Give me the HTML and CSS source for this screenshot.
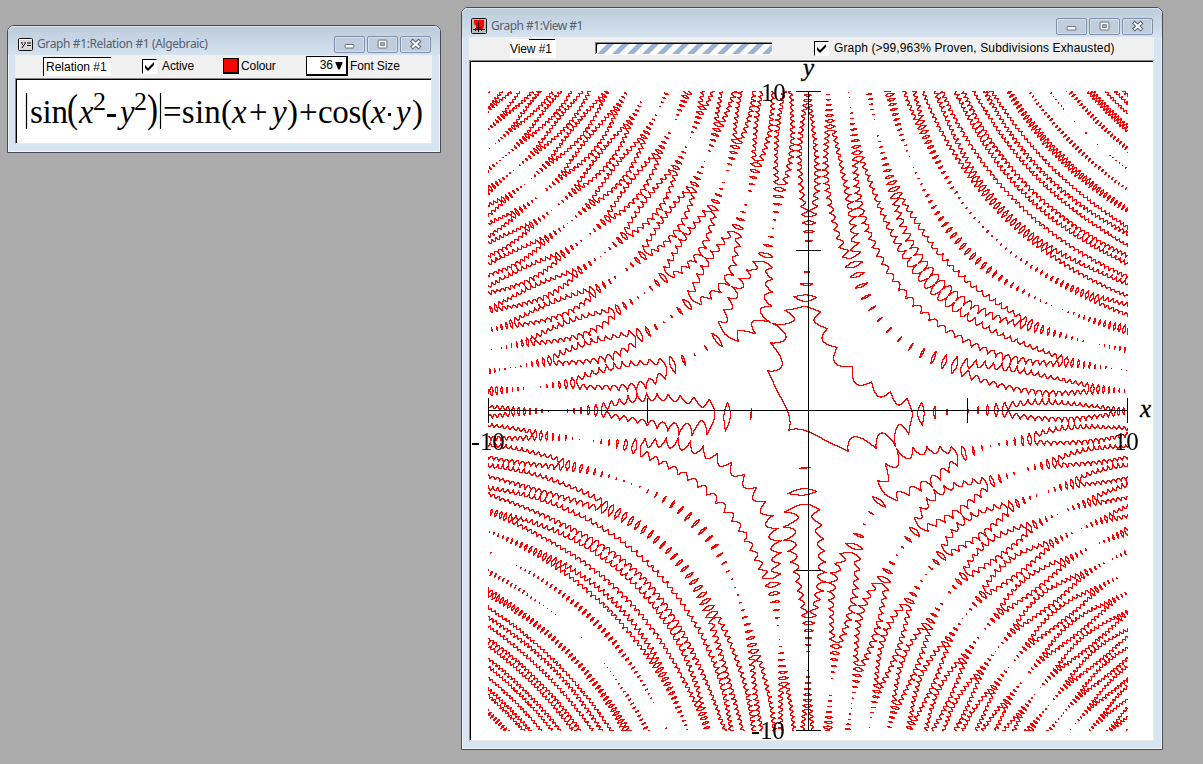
FILE: index.html
```html
<!DOCTYPE html>
<html lang="en">
<head>
<meta charset="utf-8">
<title>Graph #1</title>
<link rel="stylesheet" href="styles.css">
</head>
<body>
<svg class="defs" width="0" height="0">
  <symbol id="min" viewBox="0 0 31 17"><rect x="10.500" y="8.500" width="10" height="4" rx="1" fill="#fff" stroke="#5a6070"/></symbol>
  <symbol id="max" viewBox="0 0 31 17"><rect x="10.500" y="3.500" width="10" height="9" rx="1" fill="#fff" stroke="#5a6070"/><rect x="13.500" y="6.500" width="4" height="3" fill="#b8c8da" stroke="#5a6070"/></symbol>
  <symbol id="cls" viewBox="0 0 31 17"><path d="M12.500 5L19 11M19 5L12.500 11" stroke="#5a6070" stroke-width="4.600" stroke-linecap="square"/><path d="M12.500 5L19 11M19 5L12.500 11" stroke="#fff" stroke-width="2.400" stroke-linecap="square"/></symbol>
  <symbol id="tick" viewBox="0 0 13 13"><path d="M2 5v3l3 3 6-6V2L5 8z" fill="#000"/></symbol>
</svg>

<section class="window relation">
  <header class="titlebar">
    <svg class="app-icon" width="15" height="13" viewBox="0 0 15 13"><rect x=".5" y=".5" width="14" height="12" rx="1" fill="#d8d8d8" stroke="#111"/><path d="M1.500 11.500V1.500H13.500" fill="none" stroke="#fff"/><path d="M4 4v2l1.500 1.500L7 6V4M6 7L4 10M9 5h4M9 7.500h4" fill="none" stroke="#000"/></svg>
    <h1>Graph #1:Relation #1 (Algebraic)</h1>
    <nav class="controls"><svg viewBox="0 0 31 17"><use href="#min"/></svg><svg viewBox="0 0 31 17"><use href="#max"/></svg><svg viewBox="0 0 31 17"><use href="#cls"/></svg></nav>
  </header>
  <div class="toolbar">
    <span class="field relation-name">Relation #1</span>
    <span class="check"><svg><use href="#tick"/></svg></span><span class="label active">Active</span>
    <span class="swatch"></span><span class="label colour">Colour</span>
    <span class="select">36<i></i></span><span class="label">Font Size</span>
  </div>
  <div class="pane formula">
    <svg width="413" height="62" viewBox="0 0 413 62">
      <path d="M10.500 14V50M144.500 14V50" stroke="#000" stroke-width="1.200"/>
      <g class="math">
        <text x="14" y="44" textLength="38">sin</text>
        <text class="paren" transform="translate(51 43) scale(1 1.190)">(</text>
        <text class="var" x="63" y="44">x</text><text class="sup" x="77" y="31">2</text>
        <path d="M91 35h9v3h-9z"/>
        <text class="var" x="104" y="44">y</text><text class="sup" x="118" y="31">2</text>
        <text class="paren" transform="translate(131 43) scale(1 1.190)">)</text>
        <text x="147" y="44" textLength="69">=sin(</text>
        <text class="var" x="216" y="44">x</text><text x="233" y="44">+</text>
        <text class="var" x="256" y="44">y</text><text x="271" y="44">)</text>
        <text x="283" y="44">+</text>
        <text x="302" y="44" textLength="54">cos(</text>
        <text class="var" x="355" y="44">x</text><rect x="372" y="34" width="3" height="3"/>
        <text class="var" x="380" y="44">y</text><text x="396" y="44">)</text>
      </g>
    </svg>
  </div>
</section>

<section class="window view">
  <header class="titlebar">
    <svg class="app-icon" width="16" height="16" viewBox="0 0 16 16"><rect x=".5" y=".5" width="15" height="15" rx="1" fill="#bbb" stroke="#111"/><path d="M3 2h10v7l-2 2H5V8L3 6z" fill="#f00"/><path d="M7.500 3v11M2 11.500h12M4.500 10v3M10.500 9v4M5.500 9.500h4" stroke="#000" fill="none"/></svg>
    <h1>Graph #1:View #1</h1>
    <nav class="controls"><svg viewBox="0 0 31 17"><use href="#min"/></svg><svg viewBox="0 0 31 17"><use href="#max"/></svg><svg viewBox="0 0 31 17"><use href="#cls"/></svg></nav>
  </header>
  <div class="toolbar">
    <span class="field view-name">View #1</span>
    <svg class="progress" width="178" height="13" viewBox="0 0 178 13">
      <defs><pattern id="stripes" width="15" height="10" patternUnits="userSpaceOnUse" x="2" y="2"><rect width="15" height="10" fill="#fff"/><path d="M0 10L10 0h7L7 10zM-15 10L-5 0h7L-8 10z" fill="#9ab3d5"/></pattern></defs>
      <rect width="178" height="13" fill="url(#stripes)"/><path d="M0 .5H177" stroke="#888"/><path d="M1 1.500H177M1.500 1V11" stroke="#000"/><path d="M.5 0V12" stroke="#888"/><path d="M0 12.500H178M177.500 0V13" stroke="#fff"/>
    </svg>
    <span class="check"><svg><use href="#tick"/></svg></span><span class="label">Graph (&gt;99,963% Proven, Subdivisions Exhausted)</span>
  </div>
  <div class="pane graph">
    <canvas id="plot" width="640" height="640"></canvas>
    <span class="tag y-name">y</span><span class="tag x-name">x</span>
    <span class="tag y-max">10</span><span class="tag y-min"><b></b>10</span>
    <span class="tag x-min"><b></b>10</span><span class="tag x-max">10</span>
  </div>
</section>
<script src="plot.js"></script>
</body>
</html>
```
FILE: styles.css
```css
* { box-sizing: border-box; }
body { margin: 0; width: 1203px; height: 764px; overflow: hidden; background: #ababab; position: relative; font: 12px/15px "Liberation Sans", Arial, sans-serif; color: #000; }
.defs { position: absolute; }
.window { position: absolute; display: flex; flex-direction: column; border: 1px solid #484c52; border-radius: 7px 7px 0 0; background: #d7e4f2; box-shadow: inset 0 0 0 1px #eef4fa; padding: 0 8px 8px 7px; }
.relation { left: 7px; top: 25px; width: 434px; height: 128px; }
.view { left: 461px; top: 7px; width: 702px; height: 743px; }
.titlebar { display: flex; align-items: center; height: 29px; margin: 0 -8px 0 -7px; padding: 7px 9px 0 10px; background: linear-gradient(#bccbda, #d5e2f0); border-radius: 6px 6px 0 0; box-shadow: inset 0 1px #dce6f0; flex: none; }
.app-icon { flex: none; margin-right: 4px; }
.view .app-icon { margin: 0 4px 0 -1px; }
h1 { margin: 0; flex: 1; font: 12px/16px "Noto Sans", sans-serif; color: #56606c; white-space: nowrap; letter-spacing: -.38px; }
.view h1 { letter-spacing: -.5px; }
.controls { display: flex; gap: 2px; }
.controls svg { width: 31px; height: 17px; border: 1px solid #8390ad; border-radius: 2px; box-shadow: inset 0 0 0 1px #d3dfeb; background: #bfcddd; }
.toolbar { display: flex; align-items: center; background: #f0f0f0; height: 23px; flex: none; white-space: nowrap; }
.relation .toolbar { padding: 0 0 1px 28px; }
.view .toolbar { padding-left: 41px; }
.field { height: 19px; padding: 2px 0 0 2px; background: #fff; border-top: 1px solid #000; border-left: 1px solid #000; flex: none; }
.relation-name { width: 68px; margin-right: 31px; }
.view-name { width: 46px; padding: 3px 0 0 0; border-left: 0; border-top: 0; background: linear-gradient(#000, #000) 19px 0 / 26px 1px no-repeat, linear-gradient(#fff, #fff); letter-spacing: -.1px; }
.check { width: 15px; height: 15px; background: #fff; border: 1px solid; border-color: #000 #fff #fff #000; flex: none; display: flex; }
.check svg { width: 13px; height: 13px; }
.label { flex: none; }
.relation .label { letter-spacing: -.1px; }
.active { margin-left: 5px; width: 61px; }
.swatch { width: 16px; height: 16px; background: #f00; border: 1px solid #000; border-width: 1px 2px 2px 1px; flex: none; }
.colour { margin-left: 2px; width: 65px; }
.select { display: flex; align-items: center; justify-content: flex-end; gap: 2px; width: 42px; height: 20px; padding-right: 3px; margin-right: 2px; background: #fff; border: 1px solid #000; border-width: 1px 2px 2px 1px; flex: none; }
.select i { width: 8px; height: 8px; background: #000; clip-path: polygon(0 0, 100% 0, 60% 100%, 40% 100%); }
.progress { flex: none; margin: 0 41px 0 39px; }
.view .label { margin-left: 5px; letter-spacing: .13px; }
.pane { flex: 1; background: #fff; border: 1px solid; border-color: #888 #e8e8e8 #e8e8e8 #888; box-shadow: inset 1px 1px #000; position: relative; }
.formula svg { display: block; }
.math { font: 33px "Liberation Serif", serif; }
.var { font-style: italic; }
.sup { font-size: 26px; }
.graph { padding: 30px 0 0 18px; }
#plot { display: block; }
.tag { position: absolute; font: 25px/24px "Liberation Serif", serif; letter-spacing: -.2px; display: flex; align-items: center; }
.tag b { width: 7px; height: 2px; margin: 4px 1px 0 0; background: #000; }
.y-name, .x-name { font-style: italic; -webkit-text-stroke: .3px #000; }
.y-name { left: 333px; top: -5px; }
.x-name { left: 670px; top: 336px; }
.y-max { left: 291px; top: 20px; }
.y-min { left: 282px; top: 658px; }
.x-min { left: 2px; top: 369px; }
.x-max { left: 644px; top: 369px; }
```
FILE: plot.js
```js
// Marks every pixel crossed by |sin(x^2 - y^2)| = sin(x + y) + cos(x * y) on [-10, 10]^2.
const SIZE = 640, SUB = 8, N = SIZE * SUB;
const ctx = document.getElementById('plot').getContext('2d');
const img = ctx.createImageData(SIZE, SIZE);
const coord = i => -10 + 20 * i / N;
const X = new Float64Array(N + 1), S = new Float64Array(N + 1), C = new Float64Array(N + 1);
const S2 = new Float64Array(N + 1), C2 = new Float64Array(N + 1);
for (let i = 0; i <= N; i++) {
  const x = X[i] = coord(i);
  S[i] = Math.sin(x); C[i] = Math.cos(x);
  S2[i] = Math.sin(x * x); C2[i] = Math.cos(x * x);
}
// bit 1: positive sample seen, bit 2: negative sample seen
const seen = new Uint8Array(SIZE * SIZE);
for (let j = 0; j <= N; j++) {
  const m = N - j, y = X[m], sy = S[m], cy = C[m], sy2 = S2[m], cy2 = C2[m];
  const r1 = Math.min(SIZE - 1, Math.floor(j / SUB)), r0 = j % SUB === 0 && j > 0 ? j / SUB - 1 : r1;
  for (let i = 0; i <= N; i++) {
    const c1 = Math.min(SIZE - 1, Math.floor(i / SUB)), c0 = i % SUB === 0 && i > 0 ? i / SUB - 1 : c1;
    const v = Math.abs(S2[i] * cy2 - C2[i] * sy2) - S[i] * cy - C[i] * sy - Math.cos(X[i] * y);
    const bit = v > 0 ? 1 : 2;
    seen[r0 * SIZE + c0] |= bit; seen[r0 * SIZE + c1] |= bit;
    seen[r1 * SIZE + c0] |= bit; seen[r1 * SIZE + c1] |= bit;
  }
}
for (let k = 0; k < SIZE * SIZE; k++) {
  if (seen[k] === 3) { img.data[4 * k] = 255; img.data[4 * k + 3] = 255; }
}
ctx.putImageData(img, 0, 0);
ctx.fillStyle = '#000';
ctx.fillRect(0, 319, 640, 1);
ctx.fillRect(320, 0, 1, 640);
for (const x of [0, 159, 479, 639]) ctx.fillRect(x, 307, 1, 25);
for (const y of [0, 159, 479, 639]) ctx.fillRect(308, y, 25, 1);
```
